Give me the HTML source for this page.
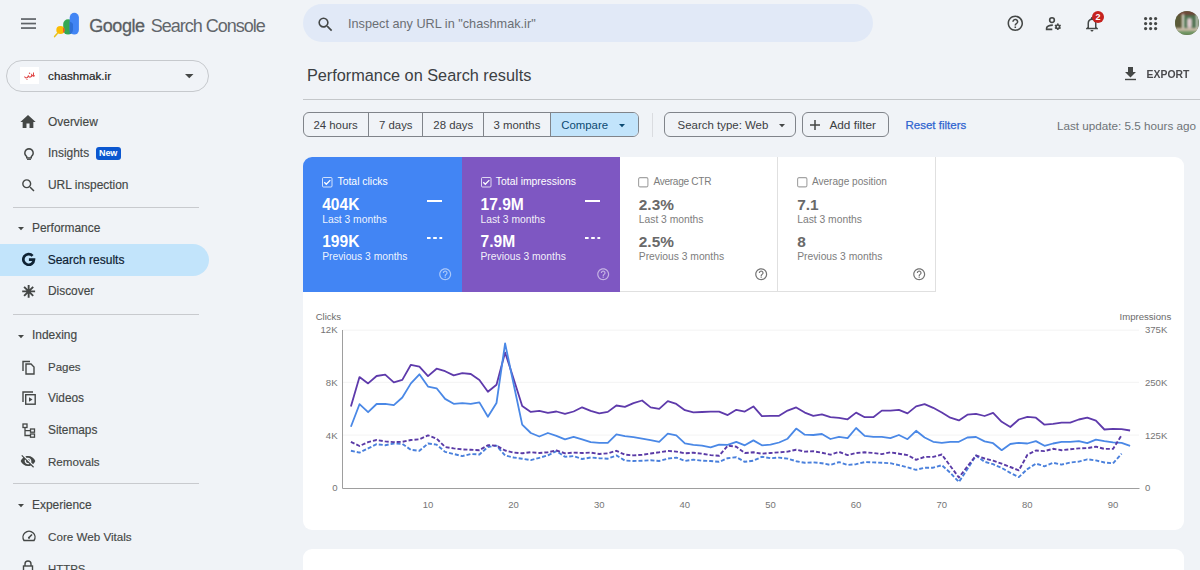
<!DOCTYPE html>
<html><head><meta charset="utf-8"><style>
*{box-sizing:border-box;margin:0;padding:0}
html,body{width:1200px;height:570px;overflow:hidden;background:#f0f3f7;font-family:"Liberation Sans",sans-serif;color:#444746}
.t{position:absolute;line-height:1;white-space:nowrap}
.a{position:absolute}
svg{position:absolute;overflow:visible}
</style></head><body>
<svg style="left:21px;top:17.7px" width="15" height="11"><rect x="0" y="0.2" width="15" height="1.7" fill="#5f6368"/><rect x="0" y="4.7" width="15" height="1.7" fill="#5f6368"/><rect x="0" y="9.2" width="15" height="1.7" fill="#5f6368"/></svg>
<svg style="left:53px;top:12px" width="27" height="26" viewBox="0 0 27 26">
<rect x="10.2" y="7.2" width="9.8" height="15.4" rx="4.9" fill="#34a853"/>
<rect x="16.7" y="0.8" width="9.2" height="21.7" rx="4.6" fill="#4285f4"/>
<path d="M16.7 9.5 A4.9 4.9 0 0 1 20 12.1 V17.7 A4.9 4.9 0 0 1 16.7 22.1 Z" fill="#2f6fd6"/>
<circle cx="7.4" cy="18" r="4.1" fill="#fbbc04"/>
<path d="M10.2 14.9 A4.1 4.1 0 0 1 10.2 21.1 Z" fill="#ea4335"/>
<path d="M4.3 21.6 L1.6 24.6" stroke="#e8c21a" stroke-width="1.5" stroke-linecap="round"/>
</svg>
<div class="t" style="left:89.20px;top:16.76px;font-size:18.00px;color:#5a5e63;letter-spacing:-0.43px;-webkit-text-stroke:0.3px #5a5e63">Google</div>
<div class="t" style="left:150.80px;top:16.76px;font-size:18.00px;color:#62666b;letter-spacing:-1.00px;">Search Console</div>
<div class="a" style="left:303px;top:4px;width:570px;height:38px;border-radius:19px;background:#e1e9f7"></div>
<svg style="left:315.6px;top:15.4px" width="19" height="19" viewBox="0 0 24 24"><path d="M15.5 14h-.79l-.28-.27A6.47 6.47 0 0 0 16 9.5 6.5 6.5 0 1 0 9.5 16c1.61 0 3.09-.59 4.23-1.57l.27.28v.79l5 4.99L20.49 19l-4.99-5zm-6 0C7.01 14 5 11.99 5 9.5S7.01 5 9.5 5 14 7.01 14 9.5 11.99 14 9.5 14z" fill="#444746"/></svg>
<div class="t" style="left:348.00px;top:17.75px;font-size:12.70px;color:#6b6f74;">Inspect any URL in "chashmak.ir"</div>
<svg style="left:1006.2px;top:14.2px" width="18.6" height="18.6" viewBox="0 0 24 24"><path d="M11 18h2v-2h-2v2zm1-16C6.48 2 2 6.48 2 12s4.48 10 10 10 10-4.48 10-10S17.52 2 12 2zm0 18c-4.41 0-8-3.59-8-8s3.59-8 8-8 8 3.59 8 8-3.59 8-8 8zm0-14c-2.21 0-4 1.79-4 4h2c0-1.1.9-2 2-2s2 .9 2 2c0 2-3 1.75-3 5h2c0-2.25 3-2.5 3-5 0-2.21-1.79-4-4-4z" fill="#444746"/></svg>
<svg style="left:1044px;top:16px" width="20" height="16" viewBox="1044 16 20 16"><circle cx="1052" cy="20.1" r="2.35" fill="none" stroke="#444746" stroke-width="1.6"/><path d="M1052.8 25.1 C1049.3 25.1 1046.6 26.5 1046.6 28.1 V29.4 H1052.3" fill="none" stroke="#444746" stroke-width="1.6"/><g transform="translate(1057.8 26.7)"><circle r="1.75" fill="none" stroke="#444746" stroke-width="1.6"/><rect x="-0.75" y="-3.3" width="1.5" height="1.6" fill="#444746" transform="rotate(0)"/><rect x="-0.75" y="-3.3" width="1.5" height="1.6" fill="#444746" transform="rotate(60)"/><rect x="-0.75" y="-3.3" width="1.5" height="1.6" fill="#444746" transform="rotate(120)"/><rect x="-0.75" y="-3.3" width="1.5" height="1.6" fill="#444746" transform="rotate(180)"/><rect x="-0.75" y="-3.3" width="1.5" height="1.6" fill="#444746" transform="rotate(240)"/><rect x="-0.75" y="-3.3" width="1.5" height="1.6" fill="#444746" transform="rotate(300)"/></g></svg>
<svg style="left:1083px;top:14px" width="18" height="20" viewBox="0 0 24 24"><path d="M12 22c1.1 0 2-.9 2-2h-4a2 2 0 0 0 2 2zm6-6v-5c0-3.07-1.64-5.64-4.5-6.32V4c0-.83-.67-1.5-1.5-1.5s-1.5.67-1.5 1.5v.68C7.63 5.36 6 7.92 6 11v5l-2 2v1h16v-1l-2-2zm-2 1H8v-6c0-2.48 1.51-4.5 4-4.5s4 2.02 4 4.5v6z" fill="#444746"/></svg>
<div class="a" style="left:1092px;top:10.5px;width:12px;height:12px;border-radius:50%;background:#c5221f;color:#fff;font-size:9px;font-weight:bold;line-height:12px;text-align:center">2</div>
<svg style="left:1143.8px;top:17.3px" width="13" height="13"><circle cx="1.6" cy="1.6" r="1.6" fill="#444746"/><circle cx="1.6" cy="6.6" r="1.6" fill="#444746"/><circle cx="1.6" cy="11.6" r="1.6" fill="#444746"/><circle cx="6.6" cy="1.6" r="1.6" fill="#444746"/><circle cx="6.6" cy="6.6" r="1.6" fill="#444746"/><circle cx="6.6" cy="11.6" r="1.6" fill="#444746"/><circle cx="11.6" cy="1.6" r="1.6" fill="#444746"/><circle cx="11.6" cy="6.6" r="1.6" fill="#444746"/><circle cx="11.6" cy="11.6" r="1.6" fill="#444746"/></svg>
<div class="a" style="left:1175.3px;top:11.2px;width:24px;height:24px;border-radius:50%;overflow:hidden;background:#5d6a45"><div class="a" style="left:0;top:0;width:24px;height:24px;filter:blur(1px)">
<div class="a" style="left:0;top:0;width:24px;height:5px;background:#6e4638"></div>
<div class="a" style="left:0;top:4px;width:7px;height:14px;background:#5b5a38"></div>
<div class="a" style="left:6.5px;top:3px;width:2px;height:15px;background:#e6e2d8"></div>
<div class="a" style="left:8.5px;top:4px;width:15.5px;height:14px;background:#4e7150"></div>
<div class="a" style="left:20.5px;top:3px;width:2px;height:15px;background:#d9d8cf"></div>
<div class="a" style="left:12px;top:7px;width:5px;height:10px;background:#dcc9cc;border-radius:2px"></div>
<div class="a" style="left:0;top:17px;width:24px;height:3px;background:#c9b9a6"></div>
<div class="a" style="left:0;top:20px;width:24px;height:4px;background:#6f9562"></div>
</div></div>
<div class="a" style="left:5.8px;top:60.3px;width:203.2px;height:31.3px;border:1px solid #c6c9cd;border-radius:16px"></div>
<div class="a" style="left:20px;top:67px;width:18.5px;height:17px;background:#fff"></div>
<svg style="left:22.5px;top:70px" width="14" height="11" viewBox="0 0 14 11"><path d="M1.5 6.5 q1 2 3 1 l1-2 q0 2 2 1.5 q1.5-.5 1.2-2 q1.5 1.5 3 .5" fill="none" stroke="#e04848" stroke-width="1.1"/><path d="M10.5 2.5 v4" stroke="#e04848" stroke-width="1"/><circle cx="6.5" cy="3.2" r=".7" fill="#e04848"/><circle cx="4" cy="9.5" r=".6" fill="#e04848"/></svg>
<div class="t" style="left:48.10px;top:69.90px;font-size:11.70px;color:#1f1f1f;-webkit-text-stroke:0.2px #1f1f1f">chashmak.ir</div>
<svg style="left:185px;top:74.2px" width="8.5" height="4.3"><path d="M0 0h8.5L4.25 4.3z" fill="#444746"/></svg>
<div class="a" style="left:0;top:244px;width:209px;height:32px;border-radius:0 16px 16px 0;background:#c2e4fb"></div>
<div class="t" style="left:48.00px;top:116.58px;font-size:11.95px;color:#444746;-webkit-text-stroke:0.15px #444746">Overview</div>
<div class="t" style="left:48.00px;top:148.28px;font-size:11.95px;color:#444746;-webkit-text-stroke:0.15px #444746">Insights</div>
<div class="t" style="left:48.00px;top:179.78px;font-size:11.95px;color:#444746;-webkit-text-stroke:0.15px #444746">URL inspection</div>
<div class="t" style="left:48.00px;top:286.03px;font-size:11.90px;color:#444746;-webkit-text-stroke:0.15px #444746">Discover</div>
<div class="t" style="left:48.00px;top:361.57px;font-size:11.50px;color:#444746;-webkit-text-stroke:0.15px #444746">Pages</div>
<div class="t" style="left:48.00px;top:392.77px;font-size:11.85px;color:#444746;-webkit-text-stroke:0.15px #444746">Videos</div>
<div class="t" style="left:48.00px;top:424.87px;font-size:11.85px;color:#444746;-webkit-text-stroke:0.15px #444746">Sitemaps</div>
<div class="t" style="left:48.00px;top:456.08px;font-size:11.60px;color:#444746;-webkit-text-stroke:0.15px #444746">Removals</div>
<div class="t" style="left:48.00px;top:531.04px;font-size:11.65px;color:#444746;-webkit-text-stroke:0.15px #444746">Core Web Vitals</div>
<div class="t" style="left:48.00px;top:563.65px;font-size:11.40px;color:#444746;-webkit-text-stroke:0.15px #444746">HTTPS</div>
<div class="t" style="left:47.70px;top:253.94px;font-size:12.00px;color:#0e2233;-webkit-text-stroke:0.2px #0e2233">Search results</div>
<div class="t" style="left:32.00px;top:222.78px;font-size:11.95px;color:#444746;-webkit-text-stroke:0.15px #444746">Performance</div>
<svg style="left:17.5px;top:227.1px" width="6" height="3.2"><path d="M0 0h6L3 3.2z" fill="#444746"/></svg>
<div class="t" style="left:32.00px;top:330.18px;font-size:11.95px;color:#444746;-webkit-text-stroke:0.15px #444746">Indexing</div>
<svg style="left:17.5px;top:334.5px" width="6" height="3.2"><path d="M0 0h6L3 3.2z" fill="#444746"/></svg>
<div class="t" style="left:32.00px;top:499.68px;font-size:11.95px;color:#444746;-webkit-text-stroke:0.15px #444746">Experience</div>
<svg style="left:17.5px;top:504.0px" width="6" height="3.2"><path d="M0 0h6L3 3.2z" fill="#444746"/></svg>
<div class="a" style="left:13px;top:206.9px;width:186px;height:1px;background:#c8cace"></div>
<div class="a" style="left:13px;top:313.5px;width:186px;height:1px;background:#c8cace"></div>
<div class="a" style="left:13px;top:483.2px;width:186px;height:1px;background:#c8cace"></div>
<div class="a" style="left:96.3px;top:147px;width:24.7px;height:12.5px;border-radius:3px;background:#0b57d0"></div>
<div class="t" style="left:99.00px;top:148.98px;font-size:9.00px;color:#fff;font-weight:bold;letter-spacing:-0.10px;">New</div>
<svg style="left:21.0px;top:115.0px" width="14" height="13" viewBox="3 3 18 17"><path d="M10 20v-6h4v6h5v-8h3L12 3 2 12h3v8z" fill="#444746"/></svg>
<svg style="left:23.6px;top:148.0px" width="10" height="12" viewBox="0 0 10 12"><path d="M5 0.8a4.2 4.2 0 0 0-2.3 7.7v1.4h4.6V8.5A4.2 4.2 0 0 0 5 0.8z" fill="none" stroke="#444746" stroke-width="1.4"/><path d="M3 11.2h4" stroke="#444746" stroke-width="1.4"/></svg>
<svg style="left:19.9px;top:176.9px" width="17" height="17" viewBox="0 0 24 24"><path d="M15.5 14h-.79l-.28-.27A6.47 6.47 0 0 0 16 9.5 6.5 6.5 0 1 0 9.5 16c1.61 0 3.09-.59 4.23-1.57l.27.28v.79l5 4.99L20.49 19l-4.99-5zm-6 0C7.01 14 5 11.99 5 9.5S7.01 5 9.5 5 14 7.01 14 9.5 11.99 14 9.5 14z" fill="#444746"/></svg>
<svg style="left:21.9px;top:253.2px" width="13.3" height="13.3" viewBox="0 0 13.3 13.3"><path d="M10.6 2.9 A5.3 5.3 0 1 0 11.95 6.65 H6.9" fill="none" stroke="#0e2233" stroke-width="2.7"/></svg>
<svg style="left:21.9px;top:285.1px" width="13.3" height="12.8" viewBox="0 0 13.3 12.8"><path d="M6.65 0v12.8M0.2 6.4h12.9M2.1 1.9l9.1 9M2.1 10.9l9.1-9" stroke="#444746" stroke-width="1.9"/></svg>
<svg style="left:21.5px;top:359.5px" width="13" height="15" viewBox="0 0 13 15"><path d="M1 11V1.5h7" fill="none" stroke="#444746" stroke-width="1.4"/><path d="M4 4h5l3 3v7H4z" fill="none" stroke="#444746" stroke-width="1.4"/></svg>
<svg style="left:21.5px;top:391.0px" width="14" height="14" viewBox="0 0 14 14"><path d="M1 11V1h10" fill="none" stroke="#444746" stroke-width="1.4"/><rect x="3.7" y="3.7" width="9.5" height="9.5" fill="none" stroke="#444746" stroke-width="1.4"/><path d="M7 6.3v4.5l3.5-2.25z" fill="#444746"/></svg>
<svg style="left:21.5px;top:422.5px" width="14" height="15" viewBox="0 0 14 15"><rect x="1" y="1" width="4" height="3.5" fill="none" stroke="#444746" stroke-width="1.3"/><rect x="8.5" y="6" width="4" height="3.2" fill="none" stroke="#444746" stroke-width="1.3"/><rect x="8.5" y="11" width="4" height="3.2" fill="none" stroke="#444746" stroke-width="1.3"/><path d="M3 4.5v8h5.5M3 7.6h5.5" fill="none" stroke="#444746" stroke-width="1.3"/></svg>
<svg style="left:20.2px;top:453.2px" width="16" height="16" viewBox="0 0 24 24"><path d="M12 7c2.76 0 5 2.24 5 5 0 .65-.13 1.26-.36 1.83l2.92 2.92c1.51-1.26 2.7-2.89 3.43-4.75-1.73-4.39-6-7.5-11-7.5-1.4 0-2.74.25-3.98.7l2.16 2.16C10.74 7.13 11.35 7 12 7zM2 4.27l2.28 2.28.46.46A11.8 11.8 0 0 0 1 12c1.73 4.39 6 7.5 11 7.5 1.55 0 3.03-.3 4.38-.84l.42.42L19.73 22 21 20.73 3.27 3 2 4.27zM7.53 9.8l1.55 1.55c-.05.21-.08.43-.08.65 0 1.66 1.34 3 3 3 .22 0 .44-.03.65-.08l1.55 1.55c-.67.33-1.41.53-2.2.53-2.76 0-5-2.24-5-5 0-.79.2-1.53.53-2.2zm4.31-.78l3.15 3.15.02-.16c0-1.66-1.34-3-3-3l-.17.01z" fill="#444746"/></svg>
<svg style="left:21.5px;top:530.0px" width="14" height="12" viewBox="0 0 14 12"><path d="M2 10.5A6 6 0 1 1 12 10.5z" fill="none" stroke="#444746" stroke-width="1.4"/><path d="M7 7.5l3-3" stroke="#444746" stroke-width="1.6"/><circle cx="7" cy="7.8" r="1.1" fill="#444746"/></svg>
<svg style="left:22.0px;top:560.0px" width="12" height="12" viewBox="0 0 12 12"><path d="M3 6V4a3 3 0 0 1 6 0v2" fill="none" stroke="#444746" stroke-width="1.4"/><rect x="1.5" y="6" width="9" height="7" fill="none" stroke="#444746" stroke-width="1.4"/></svg>
<div class="t" style="left:306.90px;top:67.20px;font-size:16.30px;color:#3c4043;">Performance on Search results</div>
<svg style="left:1125px;top:67px" width="11" height="13.2" viewBox="0 0 11 13.2"><path d="M3 0h5v5h3L5.5 10.6 0 5h3z" fill="#444746"/><rect x="0" y="11.8" width="11" height="1.4" fill="#444746"/></svg>
<div class="t" style="left:1146.60px;top:70.20px;font-size:10.40px;color:#4a4a4d;font-weight:bold;transform:scaleY(1.08);transform-origin:0 85%">EXPORT</div>
<div class="a" style="left:303px;top:99px;width:897px;height:1px;background:#c4c7ca"></div>
<div class="t" style="right:4.00px;top:119.70px;font-size:11.70px;color:#6f7377;">Last update: 5.5 hours ago</div>
<div class="a" style="left:303px;top:112.3px;width:335.7px;height:25px;border:1px solid #80848a;border-radius:6px;overflow:hidden"><div class="a" style="left:246.4px;top:0;width:90px;height:25px;background:#c2e4fb"></div><div class="a" style="left:63.6px;top:0;width:1px;height:25px;background:#80848a"></div><div class="a" style="left:118.2px;top:0;width:1px;height:25px;background:#80848a"></div><div class="a" style="left:179.3px;top:0;width:1px;height:25px;background:#80848a"></div><div class="a" style="left:246.2px;top:0;width:1px;height:25px;background:#80848a"></div></div>
<div class="t" style="left:313.40px;top:120.25px;font-size:11.40px;color:#3c4043;">24 hours</div>
<div class="t" style="left:379.00px;top:120.25px;font-size:11.40px;color:#3c4043;">7 days</div>
<div class="t" style="left:433.30px;top:120.25px;font-size:11.40px;color:#3c4043;">28 days</div>
<div class="t" style="left:493.50px;top:120.25px;font-size:11.40px;color:#3c4043;">3 months</div>
<div class="t" style="left:561.20px;top:120.25px;font-size:11.40px;color:#0b4a72;">Compare</div>
<svg style="left:619.3px;top:124.3px" width="6" height="3.3"><path d="M0 0h6L3 3.2z" fill="#0b4a72"/></svg>
<div class="a" style="left:651.8px;top:112.6px;width:1px;height:24px;background:#dadce0"></div>
<div class="a" style="left:664.2px;top:112.3px;width:131.7px;height:25px;border:1px solid #80848a;border-radius:6px"></div>
<div class="t" style="left:677.60px;top:120.21px;font-size:11.45px;color:#3c4043;">Search type: Web</div>
<svg style="left:779.3px;top:124.3px" width="6" height="3.3"><path d="M0 0h6L3 3.2z" fill="#444746"/></svg>
<div class="a" style="left:802.3px;top:112.3px;width:86.5px;height:25px;border:1px solid #80848a;border-radius:6px"></div>
<svg style="left:810px;top:120px" width="10" height="10"><path d="M5 0v10M0 5h10" stroke="#444746" stroke-width="1.5"/></svg>
<div class="t" style="left:829.40px;top:119.91px;font-size:11.80px;color:#3c4043;">Add filter</div>
<div class="t" style="left:905.50px;top:119.77px;font-size:11.50px;color:#2f64d0;-webkit-text-stroke:0.25px #2f64d0">Reset filters</div>
<div class="a" style="left:303px;top:157px;width:881px;height:373px;border-radius:9px;background:#fff;overflow:hidden">
<div class="a" style="left:0;top:0;width:158.5px;height:135px;background:#4285f4"></div>
<div class="a" style="left:158.5px;top:0;width:158px;height:135px;background:#7e57c2"></div>
<div class="a" style="left:316.5px;top:0;width:158px;height:135px;border-right:1px solid #e0e0e0;border-bottom:1px solid #e0e0e0"></div>
<div class="a" style="left:474.5px;top:0;width:158px;height:135px;border-right:1px solid #e0e0e0;border-bottom:1px solid #e0e0e0"></div>
</div>
<svg style="left:322.2px;top:177px" width="10.5" height="10.5" viewBox="0 0 10.5 10.5"><rect x="0.5" y="0.5" width="9.5" height="9.5" rx="1" fill="none" stroke="rgba(255,255,255,.75)" stroke-width="1"/><path d="M2.3 5.3l2 2 4-4.2" fill="none" stroke="#fff" stroke-width="1.3"/></svg>
<div class="t" style="left:337.50px;top:176.70px;font-size:10.40px;color:#ffffff;">Total clicks</div>
<div class="t" style="left:322.20px;top:196.99px;font-size:15.60px;color:#ffffff;font-weight:bold;">404K</div>
<div class="t" style="left:322.20px;top:215.18px;font-size:10.30px;color:rgba(255,255,255,.92);">Last 3 months</div>
<div class="t" style="left:322.20px;top:234.09px;font-size:15.60px;color:#ffffff;font-weight:bold;">199K</div>
<div class="t" style="left:322.20px;top:251.78px;font-size:10.30px;color:rgba(255,255,255,.92);">Previous 3 months</div>
<div class="a" style="left:426.6px;top:200px;width:15.6px;height:2px;background:#fff"></div>
<svg style="left:426.6px;top:237px" width="15.2" height="2"><path d="M0 1h15.2" stroke="#fff" stroke-width="2" stroke-dasharray="3.6 2.6"/></svg>
<svg style="left:437.6px;top:267.1px" width="14.4" height="14.4" viewBox="0 0 24 24"><path d="M11 18h2v-2h-2v2zm1-16C6.48 2 2 6.48 2 12s4.48 10 10 10 10-4.48 10-10S17.52 2 12 2zm0 18c-4.41 0-8-3.59-8-8s3.59-8 8-8 8 3.59 8 8-3.59 8-8 8zm0-14c-2.21 0-4 1.79-4 4h2c0-1.1.9-2 2-2s2 .9 2 2c0 2-3 1.75-3 5h2c0-2.25 3-2.5 3-5 0-2.21-1.79-4-4-4z" fill="rgba(255,255,255,.55)"/></svg>
<svg style="left:480.5px;top:177px" width="10.5" height="10.5" viewBox="0 0 10.5 10.5"><rect x="0.5" y="0.5" width="9.5" height="9.5" rx="1" fill="none" stroke="rgba(255,255,255,.75)" stroke-width="1"/><path d="M2.3 5.3l2 2 4-4.2" fill="none" stroke="#fff" stroke-width="1.3"/></svg>
<div class="t" style="left:495.80px;top:176.70px;font-size:10.40px;color:#ffffff;">Total impressions</div>
<div class="t" style="left:480.50px;top:196.99px;font-size:15.60px;color:#ffffff;font-weight:bold;">17.9M</div>
<div class="t" style="left:480.50px;top:215.18px;font-size:10.30px;color:rgba(255,255,255,.92);">Last 3 months</div>
<div class="t" style="left:480.50px;top:234.09px;font-size:15.60px;color:#ffffff;font-weight:bold;">7.9M</div>
<div class="t" style="left:480.50px;top:251.78px;font-size:10.30px;color:rgba(255,255,255,.92);">Previous 3 months</div>
<div class="a" style="left:584.9px;top:200px;width:15.6px;height:2px;background:#fff"></div>
<svg style="left:584.9px;top:237px" width="15.2" height="2"><path d="M0 1h15.2" stroke="#fff" stroke-width="2" stroke-dasharray="3.6 2.6"/></svg>
<svg style="left:595.9px;top:267.1px" width="14.4" height="14.4" viewBox="0 0 24 24"><path d="M11 18h2v-2h-2v2zm1-16C6.48 2 2 6.48 2 12s4.48 10 10 10 10-4.48 10-10S17.52 2 12 2zm0 18c-4.41 0-8-3.59-8-8s3.59-8 8-8 8 3.59 8 8-3.59 8-8 8zm0-14c-2.21 0-4 1.79-4 4h2c0-1.1.9-2 2-2s2 .9 2 2c0 2-3 1.75-3 5h2c0-2.25 3-2.5 3-5 0-2.21-1.79-4-4-4z" fill="rgba(255,255,255,.55)"/></svg>
<svg style="left:638.4px;top:177px" width="10.5" height="10.5" viewBox="0 0 10.5 10.5"><rect x="0.6" y="0.6" width="9.3" height="9.3" rx="1.5" fill="none" stroke="#a3a3a3" stroke-width="1.1"/></svg>
<div class="t" style="left:653.50px;top:176.95px;font-size:10.10px;color:#7d7d7d;letter-spacing:-0.30px;">Average CTR</div>
<div class="t" style="left:638.80px;top:197.16px;font-size:15.40px;color:#696969;font-weight:bold;">2.3%</div>
<div class="t" style="left:638.80px;top:215.18px;font-size:10.30px;color:#7d7d7d;">Last 3 months</div>
<div class="t" style="left:638.80px;top:234.26px;font-size:15.40px;color:#696969;font-weight:bold;">2.5%</div>
<div class="t" style="left:638.80px;top:251.78px;font-size:10.30px;color:#7d7d7d;">Previous 3 months</div>
<svg style="left:753.9px;top:267.2px" width="14.4" height="14.4" viewBox="0 0 24 24"><path d="M11 18h2v-2h-2v2zm1-16C6.48 2 2 6.48 2 12s4.48 10 10 10 10-4.48 10-10S17.52 2 12 2zm0 18c-4.41 0-8-3.59-8-8s3.59-8 8-8 8 3.59 8 8-3.59 8-8 8zm0-14c-2.21 0-4 1.79-4 4h2c0-1.1.9-2 2-2s2 .9 2 2c0 2-3 1.75-3 5h2c0-2.25 3-2.5 3-5 0-2.21-1.79-4-4-4z" fill="#757575"/></svg>
<svg style="left:796.8px;top:177px" width="10.5" height="10.5" viewBox="0 0 10.5 10.5"><rect x="0.6" y="0.6" width="9.3" height="9.3" rx="1.5" fill="none" stroke="#a3a3a3" stroke-width="1.1"/></svg>
<div class="t" style="left:811.90px;top:176.95px;font-size:10.10px;color:#7d7d7d;letter-spacing:0.00px;">Average position</div>
<div class="t" style="left:797.20px;top:197.16px;font-size:15.40px;color:#696969;font-weight:bold;">7.1</div>
<div class="t" style="left:797.20px;top:215.18px;font-size:10.30px;color:#7d7d7d;">Last 3 months</div>
<div class="t" style="left:797.20px;top:234.26px;font-size:15.40px;color:#696969;font-weight:bold;">8</div>
<div class="t" style="left:797.20px;top:251.78px;font-size:10.30px;color:#7d7d7d;">Previous 3 months</div>
<svg style="left:912.3px;top:267.2px" width="14.4" height="14.4" viewBox="0 0 24 24"><path d="M11 18h2v-2h-2v2zm1-16C6.48 2 2 6.48 2 12s4.48 10 10 10 10-4.48 10-10S17.52 2 12 2zm0 18c-4.41 0-8-3.59-8-8s3.59-8 8-8 8 3.59 8 8-3.59 8-8 8zm0-14c-2.21 0-4 1.79-4 4h2c0-1.1.9-2 2-2s2 .9 2 2c0 2-3 1.75-3 5h2c0-2.25 3-2.5 3-5 0-2.21-1.79-4-4-4z" fill="#757575"/></svg>
<div class="t" style="left:315.70px;top:311.66px;font-size:9.50px;color:#6b6b6b;">Clicks</div>
<div class="t" style="left:1119.50px;top:311.67px;font-size:9.60px;color:#6b6b6b;">Impressions</div>
<div class="t" style="right:862.40px;top:325.17px;font-size:9.60px;color:#757575;">12K</div>
<div class="t" style="left:1144.90px;top:325.17px;font-size:9.60px;color:#757575;">375K</div>
<div class="t" style="right:862.40px;top:377.94px;font-size:9.60px;color:#757575;">8K</div>
<div class="t" style="left:1144.90px;top:377.94px;font-size:9.60px;color:#757575;">250K</div>
<div class="t" style="right:862.40px;top:430.71px;font-size:9.60px;color:#757575;">4K</div>
<div class="t" style="left:1144.90px;top:430.71px;font-size:9.60px;color:#757575;">125K</div>
<div class="t" style="right:862.40px;top:483.48px;font-size:9.60px;color:#757575;">0</div>
<div class="t" style="left:1144.90px;top:483.48px;font-size:9.60px;color:#757575;">0</div>
<svg style="left:0;top:0" width="1200" height="570"><path d="M342.5 330.2H1139" stroke="#f3f3f3" stroke-width="1"/><path d="M342.5 382.3H1139" stroke="#f3f3f3" stroke-width="1"/><path d="M342.5 435.1H1139" stroke="#f3f3f3" stroke-width="1"/><path d="M342.5 330V488.5H1139.5" fill="none" stroke="#9e9e9e" stroke-width="1"/><polyline points="350.9,406.6 359.5,377.1 368.1,383.4 376.6,376.0 385.2,374.7 393.8,382.4 402.3,379.9 410.9,364.8 419.4,366.6 428.0,376.1 436.6,368.7 445.1,371.2 453.7,375.4 462.3,373.2 470.8,374.0 479.4,379.9 487.9,391.8 496.5,384.8 505.1,352.5 513.6,378.8 522.2,405.9 530.8,411.9 539.3,410.8 547.9,412.9 556.4,411.5 565.0,413.9 573.6,411.5 582.1,407.3 590.7,410.8 599.3,413.3 607.8,411.9 616.4,405.5 624.9,406.9 633.5,403.1 642.1,400.5 650.6,407.4 659.2,408.8 667.8,401.1 676.3,403.9 684.9,410.2 693.4,412.3 702.0,412.0 710.6,411.6 719.1,411.6 727.7,415.1 736.3,409.8 744.8,411.6 753.4,406.4 761.9,416.2 770.5,415.8 779.1,415.8 787.6,410.6 796.2,407.4 804.8,412.6 813.3,415.8 821.9,414.4 830.4,417.2 839.0,417.9 847.6,419.3 856.1,412.6 864.7,417.2 873.3,417.2 881.8,410.6 890.4,410.6 898.9,409.8 907.5,413.4 916.1,406.4 924.6,404.1 933.2,407.8 941.8,412.5 950.3,417.7 958.9,420.4 967.4,414.7 976.0,413.9 984.6,416.0 993.1,412.8 1001.7,421.8 1010.3,427.0 1018.8,419.5 1027.4,416.8 1035.9,417.7 1044.5,424.7 1053.1,423.9 1061.6,422.6 1070.2,422.6 1078.8,419.5 1087.3,417.7 1095.9,420.7 1104.4,429.5 1113.0,428.8 1121.6,429.1 1130.1,430.5" fill="none" stroke="#5e3aab" stroke-width="1.8" stroke-linejoin="round"/><polyline points="350.9,426.7 359.5,404.2 368.1,412.2 376.6,404.0 385.2,403.8 393.8,405.2 402.3,397.5 410.9,383.4 419.4,374.3 428.0,386.6 436.6,388.3 445.1,398.9 453.7,403.8 462.3,403.1 470.8,403.8 479.4,402.4 487.9,416.8 496.5,403.0 505.1,343.4 513.6,384.0 522.2,424.6 530.8,433.0 539.3,436.5 547.9,433.0 556.4,435.8 565.0,439.3 573.6,436.8 582.1,439.3 590.7,442.1 599.3,442.8 607.8,442.8 616.4,434.4 624.9,436.2 633.5,437.2 642.1,438.6 650.6,440.1 659.2,441.8 667.8,433.6 676.3,435.4 684.9,443.4 693.4,444.8 702.0,445.7 710.6,447.4 719.1,444.6 727.7,444.8 736.3,441.8 744.8,445.3 753.4,440.4 761.9,445.3 770.5,444.6 779.1,442.5 787.6,438.7 796.2,428.6 804.8,434.7 813.3,435.0 821.9,434.0 830.4,439.0 839.0,436.8 847.6,438.2 856.1,428.0 864.7,435.9 873.3,436.8 881.8,436.8 890.4,438.2 898.9,435.0 907.5,439.2 916.1,430.8 924.6,437.5 933.2,441.8 941.8,442.8 950.3,441.8 958.9,441.8 967.4,437.5 976.0,437.0 984.6,441.4 993.1,443.2 1001.7,450.2 1010.3,444.0 1018.8,442.8 1027.4,443.5 1035.9,441.1 1044.5,445.8 1053.1,443.5 1061.6,441.8 1070.2,441.8 1078.8,441.1 1087.3,443.2 1095.9,439.6 1104.4,441.1 1113.0,442.3 1121.6,442.8 1130.1,445.8" fill="none" stroke="#4a88e6" stroke-width="1.8" stroke-linejoin="round"/><polyline points="350.9,450.8 359.5,452.6 368.1,448.4 376.6,444.2 385.2,445.2 393.8,443.5 402.3,443.8 410.9,449.8 419.4,450.8 428.0,443.5 436.6,444.6 445.1,451.9 453.7,454.0 462.3,456.1 470.8,454.0 479.4,454.5 487.9,447.0 496.5,445.6 505.1,455.4 513.6,457.5 522.2,458.7 530.8,460.1 539.3,457.8 547.9,455.4 556.4,451.2 565.0,456.8 573.6,456.1 582.1,459.0 590.7,457.5 599.3,458.2 607.8,458.7 616.4,455.4 624.9,460.6 633.5,461.0 642.1,460.7 650.6,460.3 659.2,461.0 667.8,458.6 676.3,457.6 684.9,461.0 693.4,459.6 702.0,460.7 710.6,461.0 719.1,461.8 727.7,458.2 736.3,457.2 744.8,461.8 753.4,460.7 761.9,456.8 770.5,458.2 779.1,457.6 787.6,458.6 796.2,461.2 804.8,462.8 813.3,462.4 821.9,463.2 830.4,464.9 839.0,462.1 847.6,464.9 856.1,464.2 864.7,462.1 873.3,462.4 881.8,462.8 890.4,463.2 898.9,465.2 907.5,467.4 916.1,469.8 924.6,467.7 933.2,467.7 941.8,465.2 950.3,472.8 958.9,482.0 967.4,469.1 976.0,455.6 984.6,461.8 993.1,464.2 1001.7,467.9 1010.3,472.8 1018.8,477.1 1027.4,469.1 1035.9,463.6 1044.5,466.3 1053.1,462.8 1061.6,464.6 1070.2,462.5 1078.8,461.6 1087.3,459.3 1095.9,460.4 1104.4,462.5 1113.0,463.3 1121.6,453.7" fill="none" stroke="#4a80dc" stroke-width="1.9" stroke-dasharray="4 2" stroke-linejoin="round"/><polyline points="350.9,441.8 359.5,446.0 368.1,442.1 376.6,440.0 385.2,441.4 393.8,442.1 402.3,441.8 410.9,440.0 419.4,439.3 428.0,435.4 436.6,438.6 445.1,447.0 453.7,448.4 462.3,449.4 470.8,449.8 479.4,450.2 487.9,445.2 496.5,445.6 505.1,450.5 513.6,452.6 522.2,453.3 530.8,452.2 539.3,453.0 547.9,452.2 556.4,450.5 565.0,453.3 573.6,452.6 582.1,453.0 590.7,452.6 599.3,454.0 607.8,453.3 616.4,450.8 624.9,454.7 633.5,455.4 642.1,454.8 650.6,453.5 659.2,452.3 667.8,450.9 676.3,451.6 684.9,453.3 693.4,452.7 702.0,453.7 710.6,455.1 719.1,455.8 727.7,445.7 736.3,446.7 744.8,453.0 753.4,452.3 761.9,453.7 770.5,453.0 779.1,452.3 787.6,451.6 796.2,449.7 804.8,451.6 813.3,451.3 821.9,452.7 830.4,454.7 839.0,451.9 847.6,455.1 856.1,453.0 864.7,452.3 873.3,453.0 881.8,454.1 890.4,452.3 898.9,453.7 907.5,455.1 916.1,459.8 924.6,456.9 933.2,456.9 941.8,454.5 950.3,466.0 958.9,477.5 967.4,466.4 976.0,455.5 984.6,458.5 993.1,460.7 1001.7,463.7 1010.3,467.0 1018.8,470.4 1027.4,454.8 1035.9,450.5 1044.5,451.1 1053.1,448.8 1061.6,450.2 1070.2,449.3 1078.8,448.4 1087.3,448.1 1095.9,446.7 1104.4,448.9 1113.0,448.9 1121.6,435.3" fill="none" stroke="#5a3aa6" stroke-width="1.9" stroke-dasharray="4 2" stroke-linejoin="round"/></svg>
<div class="t" style="left:428.00px;top:500.46px;width:60px;margin-left:-30px;text-align:center;font-size:9.50px;color:#757575;">10</div>
<div class="t" style="left:513.63px;top:500.46px;width:60px;margin-left:-30px;text-align:center;font-size:9.50px;color:#757575;">20</div>
<div class="t" style="left:599.25px;top:500.46px;width:60px;margin-left:-30px;text-align:center;font-size:9.50px;color:#757575;">30</div>
<div class="t" style="left:684.88px;top:500.46px;width:60px;margin-left:-30px;text-align:center;font-size:9.50px;color:#757575;">40</div>
<div class="t" style="left:770.50px;top:500.46px;width:60px;margin-left:-30px;text-align:center;font-size:9.50px;color:#757575;">50</div>
<div class="t" style="left:856.13px;top:500.46px;width:60px;margin-left:-30px;text-align:center;font-size:9.50px;color:#757575;">60</div>
<div class="t" style="left:941.75px;top:500.46px;width:60px;margin-left:-30px;text-align:center;font-size:9.50px;color:#757575;">70</div>
<div class="t" style="left:1027.38px;top:500.46px;width:60px;margin-left:-30px;text-align:center;font-size:9.50px;color:#757575;">80</div>
<div class="t" style="left:1113.00px;top:500.46px;width:60px;margin-left:-30px;text-align:center;font-size:9.50px;color:#757575;">90</div>
<div class="a" style="left:303px;top:549px;width:881px;height:40px;border-radius:9px;background:#fff"></div>
</body></html>
